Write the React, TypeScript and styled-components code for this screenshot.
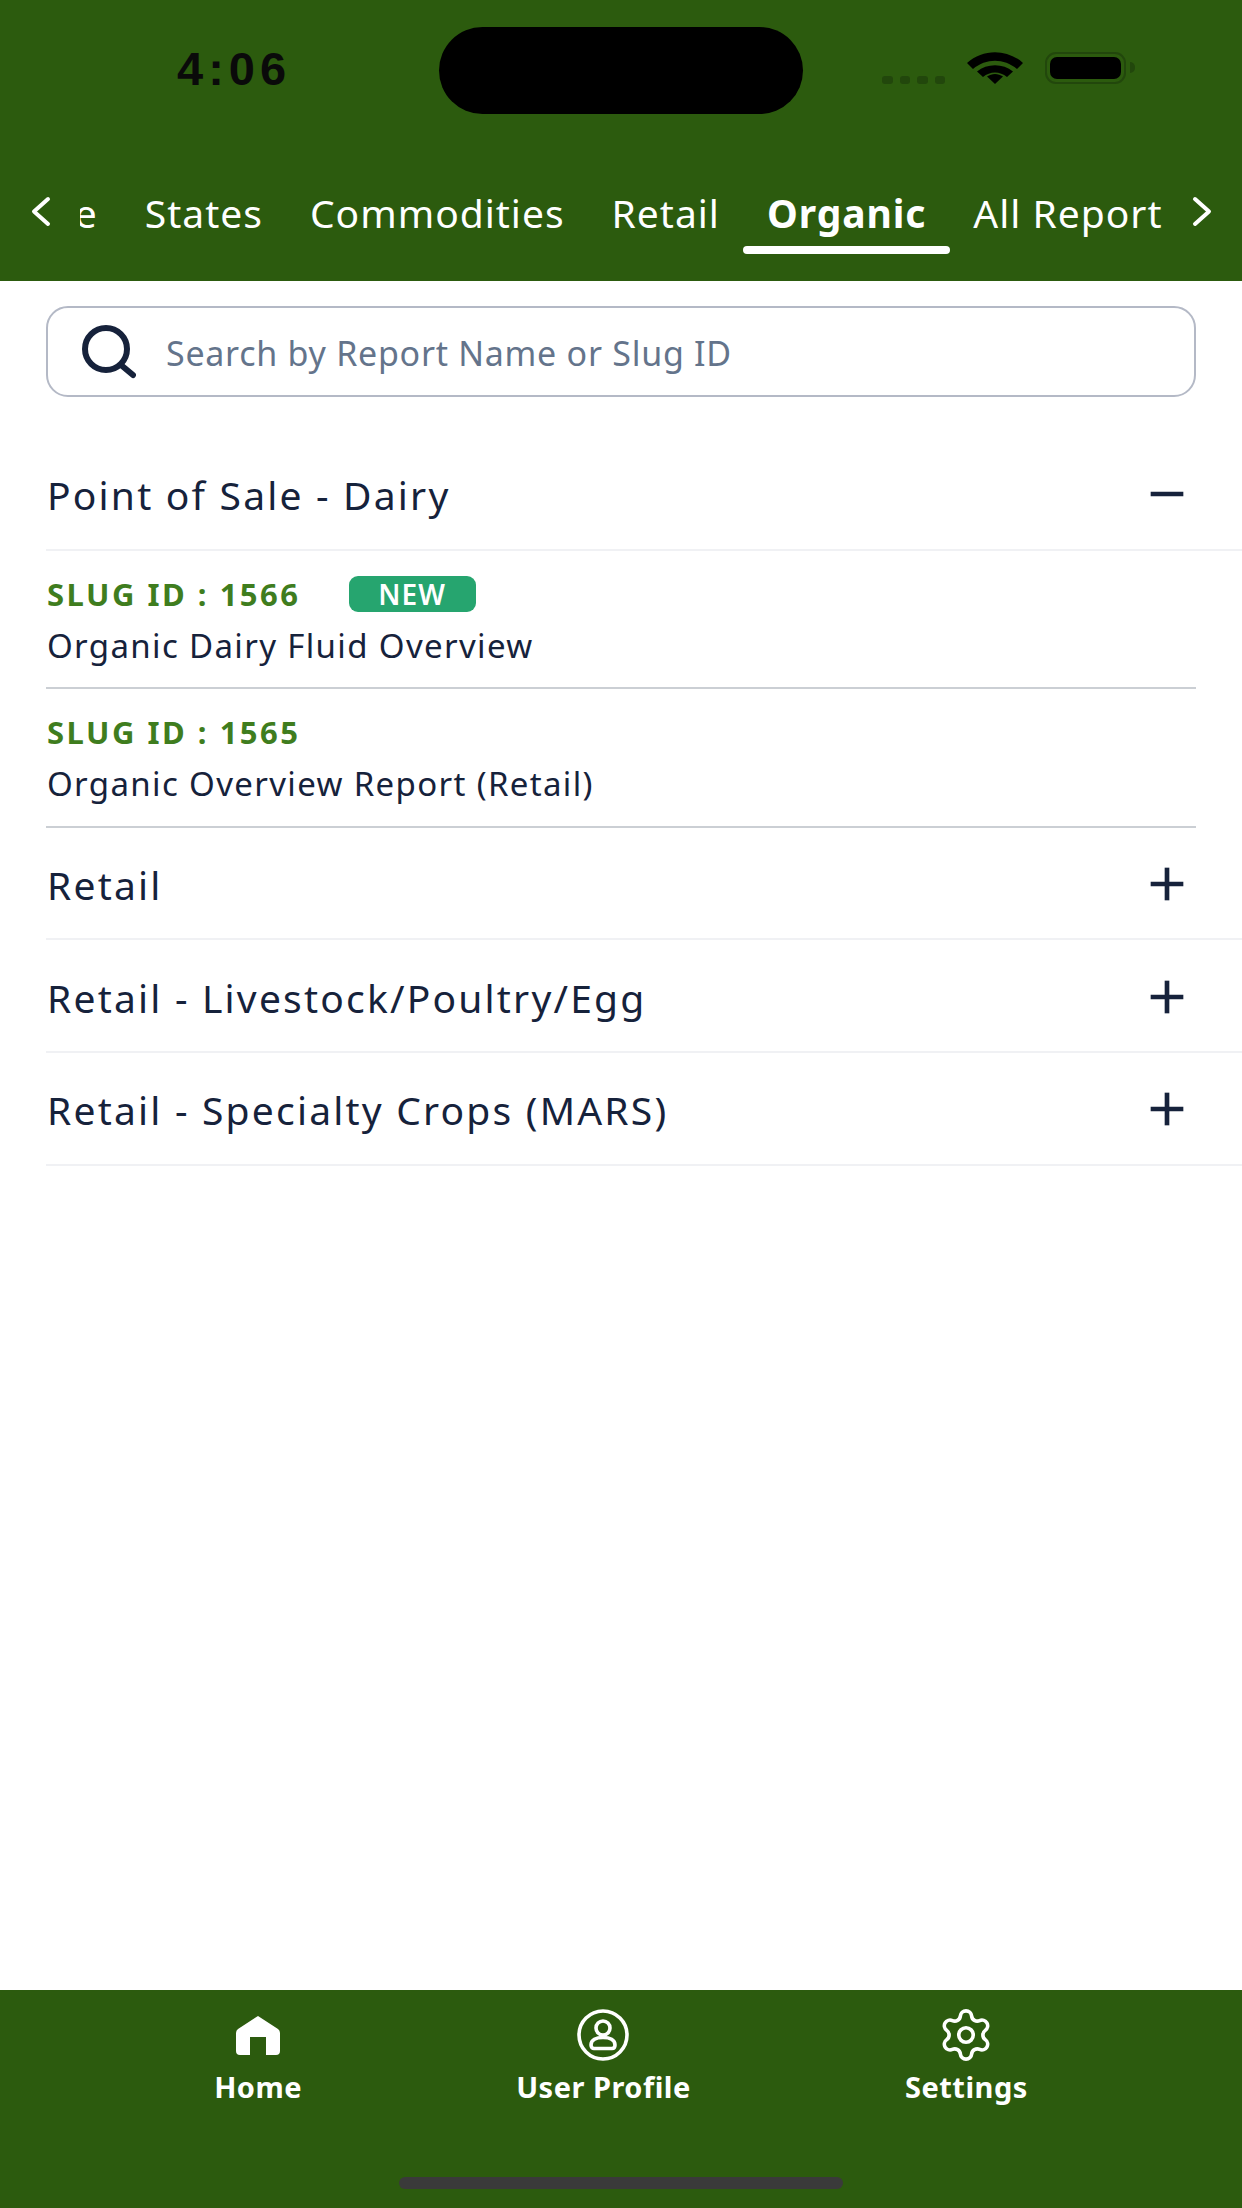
import React from 'react';
import styled, { createGlobalStyle } from 'styled-components';
import { Minus, Plus, Settings } from 'lucide-react';

const GREEN = '#2c5b0e';
const INK = '#16223b';

const GlobalStyle = createGlobalStyle`
  html, body {
    margin: 0;
    padding: 0;
    background: #fff;
  }
  * {
    box-sizing: border-box;
  }
  body {
    font-family: "Noto Sans", "Open Sans", sans-serif;
    color: ${INK};
  }
`;

const Page = styled.div`
  width: 1242px;
  height: 2208px;
  display: flex;
  flex-direction: column;
  overflow: hidden;
`;

const Header = styled.header`
  height: 281px;
  flex: none;
  background: ${GREEN};
  display: flex;
  flex-direction: column;
`;

const StatusBar = styled.div`
  display: grid;
  grid-template-columns: 1fr 364px 1fr;
  padding-top: 27px;
  height: 178px;
  flex: none;
`;

const Time = styled.div`
  padding: 18px 0 0 177px;
  font-family: "Liberation Sans", sans-serif;
  font-weight: 700;
  font-size: 47px;
  line-height: 47px;
  letter-spacing: 5px;
  color: #0a0a0a;
`;

const Island = styled.div`
  height: 87px;
  border-radius: 44px;
  background: #000;
`;

const StatusIcons = styled.div`
  display: flex;
  align-items: flex-start;
  padding: 25px 0 0 79px;
`;

const SignalDots = styled.div`
  display: flex;
  gap: 7px;
  margin: 24px 22px 0 0;
`;

const SignalDot = styled.span`
  width: 10.5px;
  height: 8px;
  border-radius: 3px;
  background: #22470c;
`;

const Battery = styled.div`
  position: relative;
  width: 81px;
  height: 32px;
  margin-left: 22px;
  padding: 3px;
  border: 2.5px solid #22470c;
  border-radius: 11px;

  &::after {
    content: '';
    position: absolute;
    left: 83px;
    top: 8px;
    width: 5px;
    height: 11px;
    border-radius: 0 5px 5px 0;
    background: #22470c;
  }
`;

const BatteryFill = styled.div`
  height: 100%;
  border-radius: 7px;
  background: #000;
`;

const TabRow = styled.nav`
  display: flex;
  align-items: flex-start;
  height: 76px;
  padding: 0 29px 0 30px;
  color: #fff;
`;

const ChevronSvg = styled.svg`
  flex: none;
  width: 21px;
  height: 31px;
  margin-top: 18px;
`;

const TabViewport = styled.div`
  flex: 1;
  min-width: 0;
  display: flex;
  justify-content: flex-end;
  overflow: hidden;
  margin: 0 6px 0 29px;
`;

const Tab = styled.div<{ $active?: boolean }>`
  position: relative;
  flex: none;
  padding: 0 23.5px 8px;
  height: 76px;
  display: flex;
  align-items: center;
  font-size: 39px;
  letter-spacing: ${({ $active }) => ($active ? '0.9px' : '1px')};
  font-weight: ${({ $active }) => ($active ? 700 : 400)};

  &::after {
    content: '';
    display: ${({ $active }) => ($active ? 'block' : 'none')};
    position: absolute;
    left: 0;
    right: 0;
    bottom: 0;
    height: 8px;
    border-radius: 4px;
    background: #fff;
  }
`;

const Main = styled.main`
  flex: 1;
  padding: 25px 0 0 46px;
`;

const SearchBox = styled.label`
  width: 1150px;
  height: 91px;
  display: flex;
  align-items: center;
  gap: 30px;
  padding-left: 34px;
  border: 2.5px solid #b4b9c6;
  border-radius: 22px;
`;

const SearchInput = styled.input`
  flex: 1;
  border: 0;
  outline: 0;
  padding: 2px 0 0;
  background: transparent;
  font-family: inherit;
  font-size: 34px;
  letter-spacing: 0.73px;
  color: ${INK};

  &::placeholder {
    color: #64748b;
    opacity: 1;
  }
`;

const Accordion = styled.div`
  margin-top: 41px;
`;

const SectionHead = styled.div`
  height: 112.6px;
  display: flex;
  align-items: center;
  justify-content: space-between;
  padding: 0 47px 0 1px;
  border-bottom: 2px solid #f0f1f4;
`;

const SectionTitle = styled.span`
  padding-top: 3px;
  font-size: 39px;
  letter-spacing: 2.2px;
`;

const ExpandedIcon = styled(Minus)`
  margin-top: 2px;
`;

const CollapsedIcon = styled(Plus)`
  margin-top: 2px;
`;

const Report = styled.div`
  width: 1150px;
  height: 138.6px;
  padding: 25px 0 0 1px;
  border-bottom: 2px solid #cbcfd4;
`;

const SlugLine = styled.div`
  display: flex;
  align-items: center;
  height: 36px;
  gap: 48px;
`;

const Slug = styled.span`
  font-size: 31px;
  font-weight: 700;
  letter-spacing: 2.5px;
  color: #3f7d1e;
`;

const NewBadge = styled.span`
  width: 127px;
  height: 36px;
  display: flex;
  align-items: center;
  justify-content: center;
  border-radius: 9px;
  background: #26a56f;
  color: #fff;
  font-size: 28px;
  font-weight: 600;
  letter-spacing: 1px;
`;

const ReportTitle = styled.div`
  margin-top: 15px;
  font-size: 33px;
  line-height: 38px;
  letter-spacing: 1.35px;
`;

const BottomNav = styled.footer`
  height: 218px;
  flex: none;
  background: ${GREEN};
  color: #fff;
  display: flex;
  flex-direction: column;
  align-items: center;
  padding: 19px 0 19px;
`;

const NavItems = styled.div`
  align-self: stretch;
  display: flex;
  justify-content: space-evenly;
`;

const NavItem = styled.div`
  display: flex;
  flex-direction: column;
  align-items: center;
`;

const NavIcon = styled.div`
  height: 52px;
  display: flex;
  align-items: center;
  justify-content: center;
`;

const NavLabel = styled.span`
  margin-top: 7px;
  font-size: 29px;
  line-height: 38px;
  font-weight: 700;
  letter-spacing: 0.5px;
`;

const HomeIndicator = styled.div`
  width: 444px;
  height: 12px;
  margin-top: auto;
  border-radius: 6px;
  background: #3a3a3a;
`;

const tabs = ['Point of Sale', 'States', 'Commodities', 'Retail', 'Organic', 'All Report'];

const reports = [
  { slug: 1566, title: 'Organic Dairy Fluid Overview', isNew: true },
  { slug: 1565, title: 'Organic Overview Report (Retail)', isNew: false }
];

const sections = ['Retail', 'Retail - Livestock/Poultry/Egg', 'Retail - Specialty Crops (MARS)'];

const WifiIcon = () => (
  <svg width="56" height="32" viewBox="0 0 56 32">
    <path d="M0 11 C16 -3.5 40 -3.5 56 11 L50 17 C37 6 19 6 6 17 Z" fill="#000" />
    <path d="M10 21 C20 12.5 36 12.5 46 21 L40 26.5 C33 20.5 23 20.5 16 26.5 Z" fill="#000" transform="translate(0 -1.5)" />
    <path d="M20 24.5 C25 21 31 21 36 24.5 L28 32 Z" fill="#000" />
  </svg>
);

const TabChevron = ({ direction }: { direction: 'left' | 'right' }) => (
  <ChevronSvg viewBox="0 0 21 31" fill="none" stroke="#fff" strokeWidth="4" strokeLinecap="round" strokeLinejoin="round">
    <path d={direction === 'left' ? 'M18 3 L4 15.5 L18 28' : 'M3 3 L17 15.5 L3 28'} />
  </ChevronSvg>
);

const SearchIcon = () => (
  <svg width="54" height="54" viewBox="0 0 54 54" fill="none" stroke={INK} strokeWidth="6" strokeLinecap="round">
    <circle cx="24" cy="24" r="21" />
    <path d="M39 40 L51 50" />
  </svg>
);

const HomeIcon = () => (
  <svg width="44" height="39" viewBox="0 0 44 39" fill="#fff">
    <path d="M22 0 L42 13 Q44 14.5 44 17 V35 Q44 39 40 39 H30 V21 H14 V39 H4 Q0 39 0 35 V17 Q0 14.5 2 13 Z" />
  </svg>
);

const UserIcon = () => (
  <svg width="52" height="52" viewBox="0 0 52 52" fill="none" stroke="#fff" strokeWidth="3.6">
    <circle cx="26" cy="26" r="24" />
    <circle cx="26" cy="19" r="7" />
    <path d="M14 36 C14 31 19 28.5 26 28.5 C33 28.5 38 31 38 36 C38 38.5 36.5 39.5 35 39.5 H17 C15.5 39.5 14 38.5 14 36 Z" />
  </svg>
);

export default function App() {
  return (
    <>
      <GlobalStyle />
      <Page>
        <Header>
          <StatusBar>
            <Time>4:06</Time>
            <Island />
            <StatusIcons>
              <SignalDots>
                <SignalDot />
                <SignalDot />
                <SignalDot />
                <SignalDot />
              </SignalDots>
              <WifiIcon />
              <Battery>
                <BatteryFill />
              </Battery>
            </StatusIcons>
          </StatusBar>
          <TabRow>
            <TabChevron direction="left" />
            <TabViewport>
              {tabs.map((tab) => (
                <Tab key={tab} $active={tab === 'Organic'}>
                  {tab}
                </Tab>
              ))}
            </TabViewport>
            <TabChevron direction="right" />
          </TabRow>
        </Header>

        <Main>
          <SearchBox>
            <SearchIcon />
            <SearchInput placeholder="Search by Report Name or Slug ID" readOnly />
          </SearchBox>

          <Accordion>
            <SectionHead>
              <SectionTitle>Point of Sale - Dairy</SectionTitle>
              <ExpandedIcon size={56} color={INK} strokeWidth={2} strokeLinecap="butt" />
            </SectionHead>
            {reports.map((report) => (
              <Report key={report.slug}>
                <SlugLine>
                  <Slug>SLUG ID : {report.slug}</Slug>
                  {report.isNew && <NewBadge>NEW</NewBadge>}
                </SlugLine>
                <ReportTitle>{report.title}</ReportTitle>
              </Report>
            ))}
            {sections.map((section) => (
              <SectionHead key={section}>
                <SectionTitle>{section}</SectionTitle>
                <CollapsedIcon size={56} color={INK} strokeWidth={2} strokeLinecap="butt" />
              </SectionHead>
            ))}
          </Accordion>
        </Main>

        <BottomNav>
          <NavItems>
            <NavItem>
              <NavIcon>
                <HomeIcon />
              </NavIcon>
              <NavLabel>Home</NavLabel>
            </NavItem>
            <NavItem>
              <NavIcon>
                <UserIcon />
              </NavIcon>
              <NavLabel>User Profile</NavLabel>
            </NavItem>
            <NavItem>
              <NavIcon>
                <Settings size={58} strokeWidth={1.5} />
              </NavIcon>
              <NavLabel>Settings</NavLabel>
            </NavItem>
          </NavItems>
          <HomeIndicator />
        </BottomNav>
      </Page>
    </>
  );
}
